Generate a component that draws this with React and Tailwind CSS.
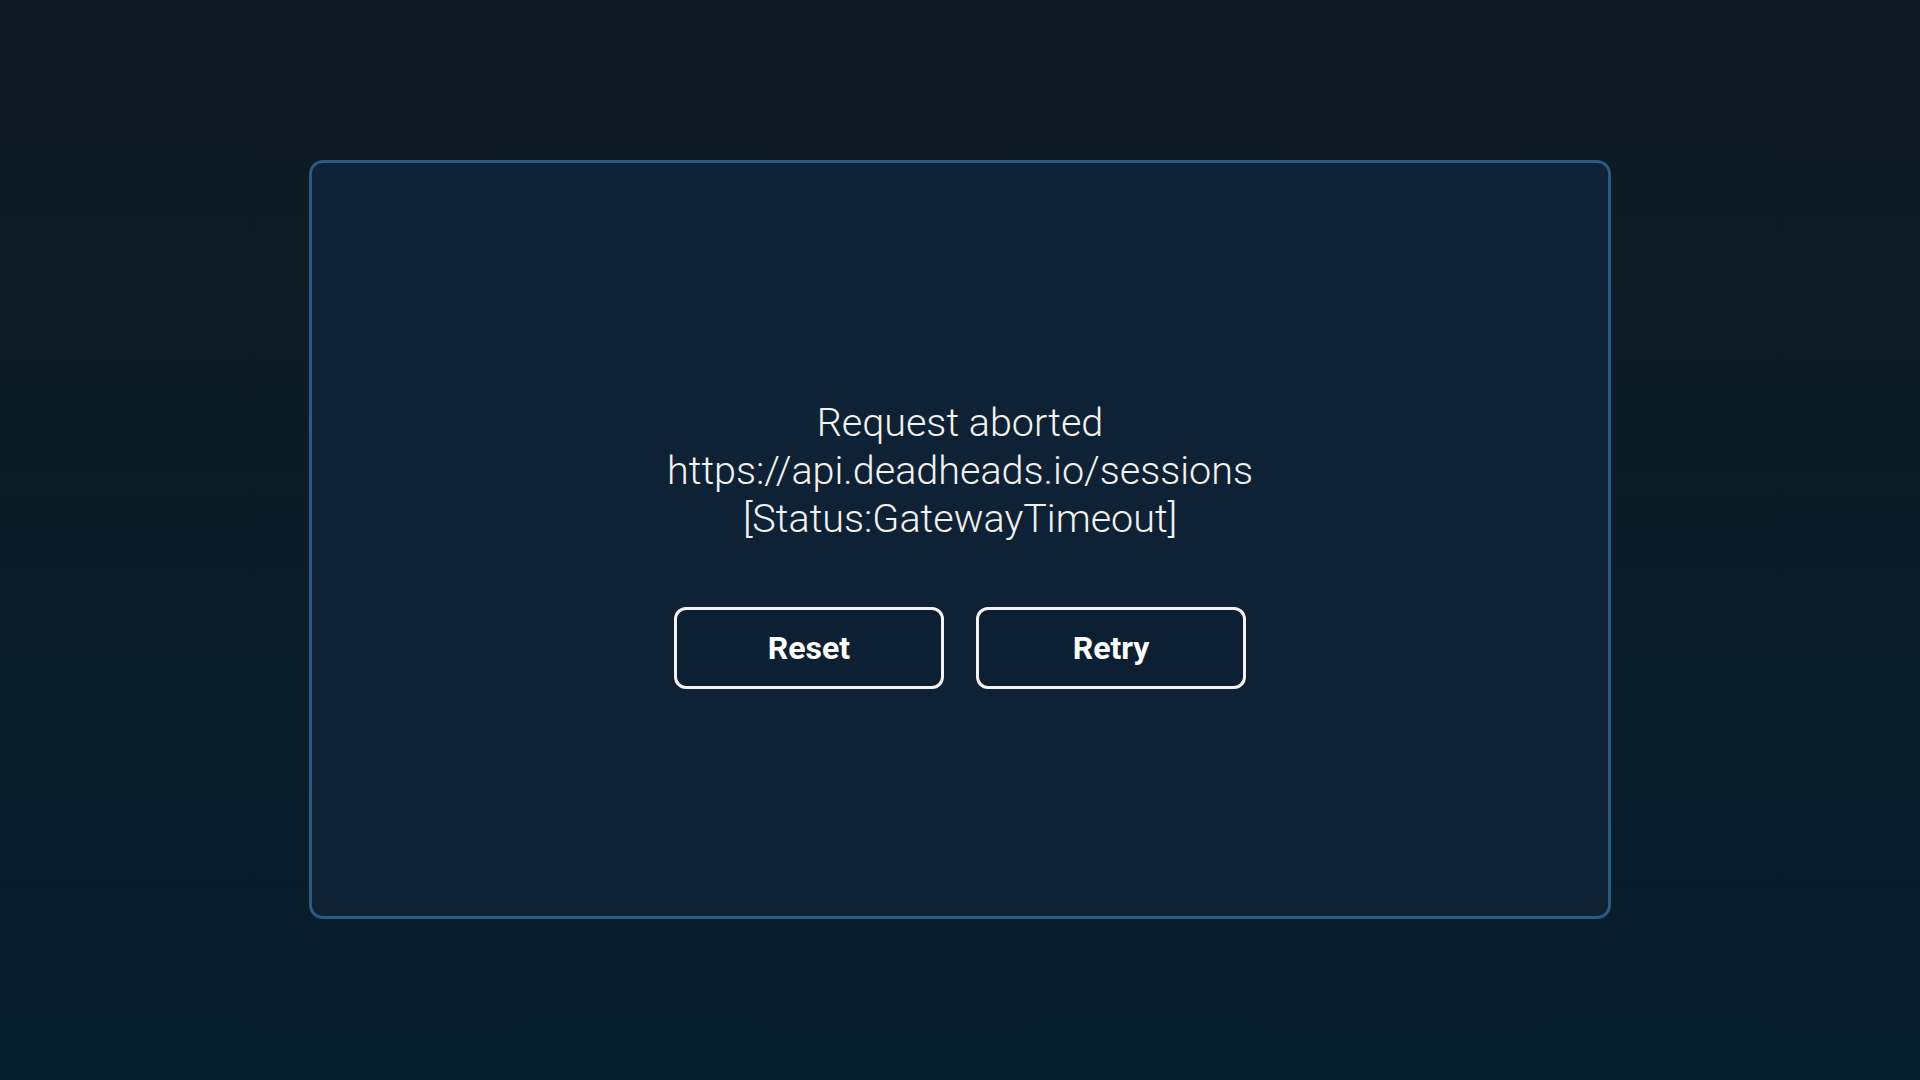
export default function App() {
  return (
    <div className="w-[1920px] h-[1080px] bg-gradient-to-b from-[#0e1a21] to-[#061d2e] flex items-center justify-center">
      <div className="w-[1302px] h-[759px] mt-[-1px] pt-[8px] rounded-[14px] border-[3px] border-[#2d5a82] bg-[#0f2235] flex flex-col items-center justify-center font-['Roboto',sans-serif]">
        <div className="text-[39.5px] leading-[48px] text-[#f2f2f2] text-center font-light">
          <div>Request aborted</div>
          <div>https://api.deadheads.io/sessions</div>
          <div>[Status:GatewayTimeout]</div>
        </div>
        <div className="flex gap-[32px] mt-[64px]">
          <button className="w-[270px] h-[82px] rounded-[12px] border-[3px] border-[#f2f2f2] bg-[#0d2033] text-white text-[32px] font-bold">Reset</button>
          <button className="w-[270px] h-[82px] rounded-[12px] border-[3px] border-[#f2f2f2] bg-[#0d2033] text-white text-[32px] font-bold">Retry</button>
        </div>
      </div>
    </div>
  );
}
